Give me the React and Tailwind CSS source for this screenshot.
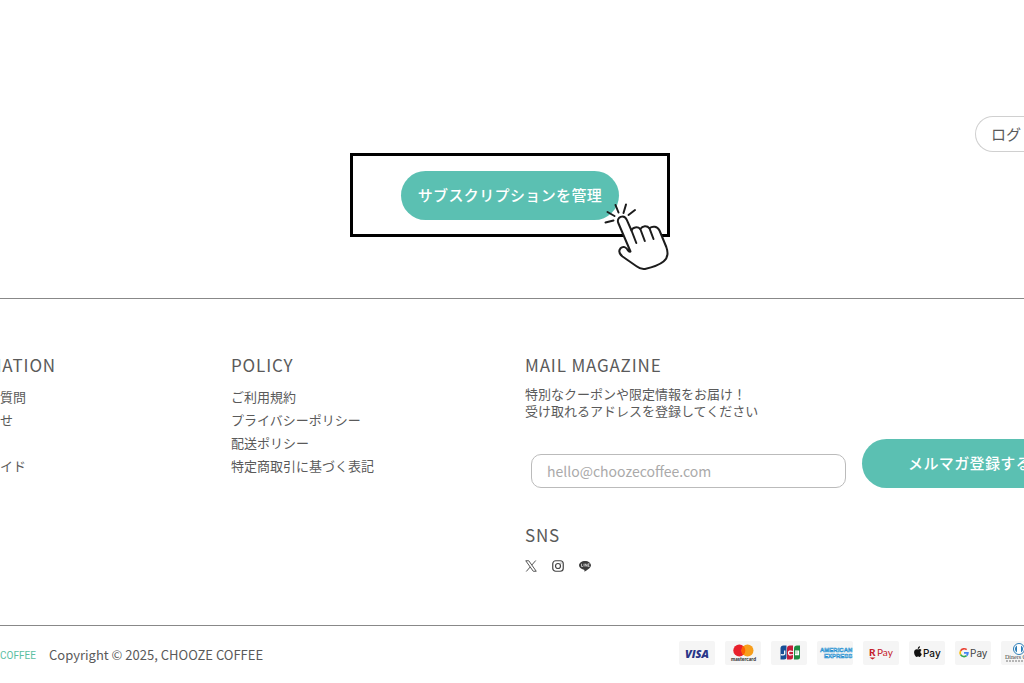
import React from "react";

const policyLinks = ["ご利用規約", "プライバシーポリシー", "配送ポリシー", "特定商取引に基づく表記"];

function PointerIcon() {
  return (
    <svg viewBox="0 0 68 68" className="absolute -right-0.5 -bottom-9 h-[68px] w-[68px]" fill="none" stroke="#1c1c1c" strokeWidth="2" strokeLinecap="round" strokeLinejoin="round" aria-hidden="true">
      <path d="M4.500 20.500L12.500 18.500M6.500 10L13.500 14M14.500 3L17.500 10.500M25 2.500L22.500 11M34 8L27.500 13" />
      <path fill="#fff" d="M29.500 49.500L17.300 21C15 15 23 11.800 25.800 17.800L30.500 28.500C31.500 25.300 36.500 24 39.300 27C41.500 23.700 46 23.300 48.500 26.300C51.500 23.500 56.500 24.300 58.500 28.500L65.300 45C67.300 50.500 66.800 56 62.500 59.500C57 64 49 65.800 44 66.900C41 67.300 38 66.300 35.500 64.300L21.500 54.500C18.500 52 17.300 49 19.500 46.300C22 43.800 25.500 45 27 48.500Q28 50 29.500 49.500Z" />
      <path d="M30.500 28.500L35.300 41M39.300 27L43.800 39M48.500 26.300L52.500 37" />
    </svg>
  );
}

function XIcon() {
  return (
    <svg viewBox="0 0 24 24" className="h-3 w-3" fill="none" stroke="#555" strokeWidth="2" aria-hidden="true">
      <path d="M1.500 1.500H7.500L22.500 22.500H16.500ZM21.500 1L13.500 10.200M10.500 13.800L2.500 23" />
    </svg>
  );
}

function InstagramIcon() {
  return (
    <svg viewBox="0 0 24 24" className="h-3 w-3" fill="none" stroke="#444" strokeWidth="2.400" aria-hidden="true">
      <rect x="1.500" y="1.500" width="21" height="21" rx="6" />
      <circle cx="12" cy="12" r="5" />
      <circle cx="18" cy="6" r="1" fill="#444" stroke="none" />
    </svg>
  );
}

function LineIcon() {
  return (
    <svg viewBox="0 0 24 24" className="h-3 w-3" aria-hidden="true">
      <path fill="#3c3c3c" d="M12 2C5.400 2 0 5.800 0 10.700C0 15.200 4.200 18.600 10 19.300C11.200 19.600 11 20.500 10.700 22.500C10.700 23.500 11.500 23.200 12.300 22.700C14.500 21.500 24 16.500 24 10.700C24 5.800 18.600 2 12 2Z" />
      <path stroke="#d8d8d8" strokeWidth="1.600" fill="none" d="M5 7.500V13H7.800M10 7.500V13M12.500 13V7.500L16 13V7.500M21 7.500H18.300V13H21M18.300 10.200H20.500" />
    </svg>
  );
}

function Card({ label, children }) {
  return (
    <li aria-label={label} className="flex h-6 w-9 shrink-0 items-center justify-center rounded-xs bg-[#f5f5f5]">
      {children}
    </li>
  );
}

function PaymentCards() {
  return (
    <ul className="flex gap-2.5">
      <Card label="VISA">
        <span className="font-['Open_Sans',sans-serif] text-[11px] leading-none font-extrabold text-[#293688] italic">VISA</span>
      </Card>
      <Card label="mastercard">
        <svg viewBox="0 0 36 24" className="h-6 w-9">
          <circle cx="14.300" cy="9.500" r="6" fill="#e8202c" />
          <circle cx="22.500" cy="9.500" r="6" fill="#f79e1b" />
          <path d="M18.400 5.100a6 6 0 0 1 0 8.800a6 6 0 0 1 0-8.800Z" fill="#ff5f00" />
          <text x="18.500" y="20" textAnchor="middle" fontSize="5" fontWeight="900" fontFamily="Lato, sans-serif" fill="#333">mastercard</text>
        </svg>
      </Card>
      <Card label="JCB">
        <svg viewBox="0 0 36 24" className="h-6 w-9">
          <path d="M12.500 4.500H15.500V16Q15.500 18.500 13 18.500H9.500V7.500Q9.500 4.500 12.500 4.500Z" fill="#174e96" />
          <path d="M19 4.500H22V16Q22 18.500 19.500 18.500H16V7.500Q16 4.500 19 4.500Z" fill="#c51d3c" />
          <path d="M26 4.500H29V16Q29 18.500 26.500 18.500H23V7.500Q23 4.500 26 4.500Z" fill="#1e8c43" />
          <path d="M13.700 9.500V13Q13 14.500 9.800 13.600M21.800 10.500Q17.500 9.200 17.500 12T21.800 13.500M24 10.200H27.500V13.700H24M24 12H28" fill="none" stroke="#fff" strokeWidth="1.300" />
        </svg>
      </Card>
      <Card label="AMERICAN EXPRESS">
        <svg viewBox="0 0 36 24" className="h-6 w-9">
          <g fontFamily="Liberation Sans, sans-serif" fontSize="6" fontWeight="700" fill="#d9edf9" stroke="#218fd0" strokeWidth="0.500">
            <text x="3" y="11">AMERICAN</text>
            <text x="7" y="16.500">EXPRESS</text>
          </g>
        </svg>
      </Card>
      <Card label="R Pay">
        <svg viewBox="0 0 36 24" className="h-6 w-9">
          <g fontFamily="Lato, sans-serif" fontSize="10" fill="#c4202b">
            <text x="6" y="15" fontWeight="900">R</text>
            <text x="14" y="15">Pay</text>
          </g>
          <path d="M6.500 16.500H12.500L9.500 18.500Z" fill="#c4202b" />
        </svg>
      </Card>
      <Card label="Apple Pay">
        <svg viewBox="0 0 36 24" className="h-6 w-9">
          <path d="M9 8.500C10 8.500 11.200 7.400 12.500 8.900C10.900 10 11.100 12.300 12.800 13C12.200 14.700 11.200 16 10.300 15.900C9.400 15.500 8.800 15.500 8 15.900C6.500 16.200 5 13 5.100 11C5.300 8.500 7.200 7.800 9 8.500ZM8.800 7.900C8.700 6.500 9.700 5.500 11 5.300C11.100 6.700 10.100 7.900 8.800 7.900Z" fill="#111" />
          <text x="14" y="15.500" fontFamily="Inter, sans-serif" fontSize="10" fontWeight="500" fill="#111">Pay</text>
        </svg>
      </Card>
      <Card label="Google Pay">
        <svg viewBox="0 0 36 24" className="h-6 w-9">
          <g fill="none" strokeWidth="1.700">
            <path d="M11.700 8.700A4 4 0 0 0 5.600 9.800" stroke="#ea4335" />
            <path d="M5.600 9.800A4 4 0 0 0 5.600 13.600" stroke="#fbbc04" />
            <path d="M5.600 13.600A4 4 0 0 0 11.600 14.700" stroke="#34a853" />
            <path d="M11.600 14.700A4 4 0 0 0 12.900 11.900H9" stroke="#4285f4" />
          </g>
          <text x="15" y="15.500" fontFamily="Inter, sans-serif" fontSize="10" fill="#444">Pay</text>
        </svg>
      </Card>
      <Card label="Diners Club">
        <svg viewBox="0 0 36 24" className="h-6 w-9">
          <circle cx="18" cy="8" r="5.500" fill="#fff" stroke="#2b7db8" />
          <path d="M16 4.500V11.500A4 4 0 0 1 16 4.500ZM20 4.500V11.500A4 4 0 0 0 20 4.500Z" fill="#2b7db8" />
          <text x="4" y="18" fontFamily="Liberation Serif, serif" fontSize="6" fill="#444">Diners Club</text>
          <path d="M5 20H31" stroke="#777" strokeDasharray="2 1" />
        </svg>
      </Card>
    </ul>
  );
}

function Heading({ children }) {
  return <h2 className="text-[17px] leading-6 tracking-wider whitespace-nowrap">{children}</h2>;
}

export default function App() {
  return (
    <div className="overflow-x-hidden bg-white font-['Noto_Sans_CJK_JP',sans-serif] text-[#5a5a5a]">
      <main className="pt-29 pb-[61px]">
        <div className="flex justify-end">
          <button type="button" className="h-9 w-[49px] rounded-l-full border border-r-0 border-[#d0d0d0] pl-[15px] text-left text-[15px] whitespace-nowrap">
            ログ
          </button>
        </div>
        <div className="flex justify-center pt-px pr-1">
          <div className="relative flex h-[84px] w-80 items-center justify-center border-3 border-black">
            <button type="button" className="h-[49px] rounded-full bg-[#5bc0b2] px-[17px] text-[15px] font-medium tracking-wide whitespace-nowrap text-white">
              サブスクリプションを管理
            </button>
            <PointerIcon />
          </div>
        </div>
      </main>

      <footer>
        <div className="grid grid-cols-[231px_294px_1fr] border-t border-[#888] pt-[54px] pb-[53px] text-[13px]">
          <nav aria-label="MATION">
            <div className="flex w-14 justify-end overflow-hidden">
              <Heading>MATION</Heading>
            </div>
            <ul className="grid grid-cols-1 auto-rows-[23px] pt-2.5">
              <li><a href="#faq">質問</a></li>
              <li><a href="#contact">せ</a></li>
              <li aria-hidden="true" />
              <li><a href="#guide">イド</a></li>
            </ul>
          </nav>
          <nav aria-label="POLICY">
            <Heading>POLICY</Heading>
            <ul className="grid auto-rows-[23px] pt-2.5">
              {policyLinks.map((text) => (
                <li key={text}><a href="#policy">{text}</a></li>
              ))}
            </ul>
          </nav>
          <section className="min-w-0">
            <Heading>MAIL MAGAZINE</Heading>
            <label htmlFor="email" className="block pt-2 leading-[17px]">
              特別なクーポンや限定情報をお届け！<br />受け取れるアドレスを登録してください
            </label>
            <form className="flex items-center pt-[19px] pl-1.5" onSubmit={(e) => e.preventDefault()}>
              <input id="email" type="email" placeholder="hello@choozecoffee.com" className="mt-4 h-[34px] min-w-0 flex-1 rounded-[10px] border border-[#bbb] px-[15px] text-[14px] placeholder:text-[#aaa]" />
              <button type="submit" className="ml-4 h-[49px] w-[162px] shrink-0 overflow-hidden rounded-l-full bg-[#5bc0b2] pl-[46px] text-left text-[15px] font-medium tracking-wide whitespace-nowrap text-white">
                メルマガ登録する
              </button>
            </form>
            <div className="pt-[35px]">
              <Heading>SNS</Heading>
              <div className="flex gap-[15px] pt-[13px]">
                <a href="#x" aria-label="X"><XIcon /></a>
                <a href="#instagram" aria-label="Instagram"><InstagramIcon /></a>
                <a href="#line" aria-label="LINE"><LineIcon /></a>
              </div>
            </div>
          </section>
        </div>
        <div className="flex items-start justify-between border-t border-[#888] pt-[15px] pb-4">
          <div className="flex items-center gap-3.5 pt-0.5">
            <span className="w-[35px] font-[Roboto,sans-serif] text-[10px] text-[#5bc0a2]">COFFEE</span>
            <small className="text-[13px] leading-6">Copyright © 2025, CHOOZE COFFEE</small>
          </div>
          <div className="w-[345px] shrink-0 overflow-hidden">
            <PaymentCards />
          </div>
        </div>
      </footer>
    </div>
  );
}
